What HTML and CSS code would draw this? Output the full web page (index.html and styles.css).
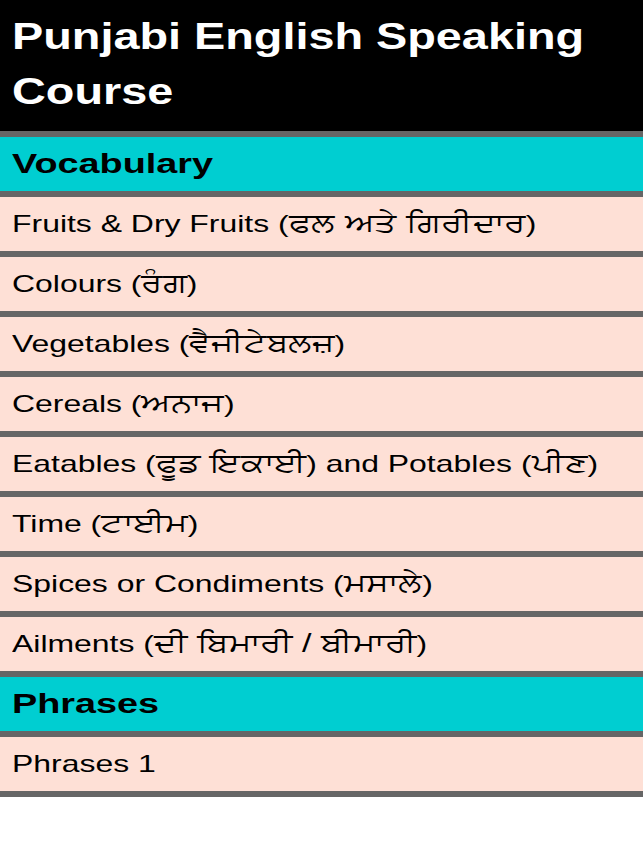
FILE: index.html
```html
<!DOCTYPE html>
<html lang="pa">
<head>
<meta charset="utf-8">
<title>Punjabi English Speaking Course</title>
<link rel="stylesheet" href="styles.css">
</head>
<body>
<header class="app-header">
  <h1 class="app-title"><span class="stretch-title">Punjabi English Speaking<br>Course</span></h1>
</header>
<main class="menu">
  <section class="group">
    <h2 class="group-title"><span class="stretch-head">Vocabulary</span></h2>
    <ul class="items">
      <li class="item"><span class="stretch-item">Fruits &amp; Dry Fruits (<span class="pa">ਫਲ ਅਤੇ ਗਿਰੀਦਾਰ</span>)</span></li>
      <li class="item"><span class="stretch-item">Colours (<span class="pa">ਰੰਗ</span>)</span></li>
      <li class="item"><span class="stretch-item">Vegetables (<span class="pa">ਵੈਜੀਟੇਬਲਜ਼</span>)</span></li>
      <li class="item"><span class="stretch-item">Cereals (<span class="pa">ਅਨਾਜ</span>)</span></li>
      <li class="item"><span class="stretch-item">Eatables (<span class="pa">ਫੂਡ ਇਕਾਈ</span>) and Potables (<span class="pa">ਪੀਣ</span>)</span></li>
      <li class="item"><span class="stretch-item">Time (<span class="pa">ਟਾਈਮ</span>)</span></li>
      <li class="item"><span class="stretch-item">Spices or Condiments (<span class="pa">ਮਸਾਲੇ</span>)</span></li>
      <li class="item"><span class="stretch-item">Ailments (<span class="pa">ਦੀ ਬਿਮਾਰੀ / ਬੀਮਾਰੀ</span>)</span></li>
    </ul>
  </section>
  <section class="group">
    <h2 class="group-title"><span class="stretch-head">Phrases</span></h2>
    <ul class="items">
      <li class="item"><span class="stretch-item">Phrases 1</span></li>
    </ul>
  </section>
</main>
</body>
</html>
```

FILE: styles.css
```css
* { box-sizing: border-box; }
html, body { margin: 0; padding: 0; background: #ffffff; }
body {
  font-family: "Liberation Sans", Arial, sans-serif;
  color: #000;
}
.app-header {
  background: #000;
  color: #fff;
  height: 137px;
  padding: 9px 12px 0;
  border-bottom: 6px solid #666666;
}
.app-title {
  margin: 0;
  font-size: 36px;
  line-height: 55px;
  font-weight: bold;
}
.stretch-title,
.stretch-head,
.stretch-item {
  display: inline-block;
  transform-origin: left center;
  white-space: nowrap;
}
.stretch-title { transform: scaleX(1.3); }
.stretch-head { transform: scaleX(1.35); }
.stretch-item { transform: scaleX(1.33); }
.menu { display: flex; flex-direction: column; }
.group { display: flex; flex-direction: column; }
.group-title {
  margin: 0;
  height: 60px;
  padding: 0 12px;
  background: #00ced1;
  border-bottom: 6px solid #666666;
  font-size: 28px;
  line-height: 54px;
  font-weight: bold;
}
.items { list-style: none; margin: 0; padding: 0; }
.item {
  height: 60px;
  padding: 0 12px;
  background: #fee0d6;
  border-bottom: 6px solid #666666;
  font-size: 24px;
  line-height: 54px;
}
.pa { font-size: 1.07em; line-height: 1; }
```
